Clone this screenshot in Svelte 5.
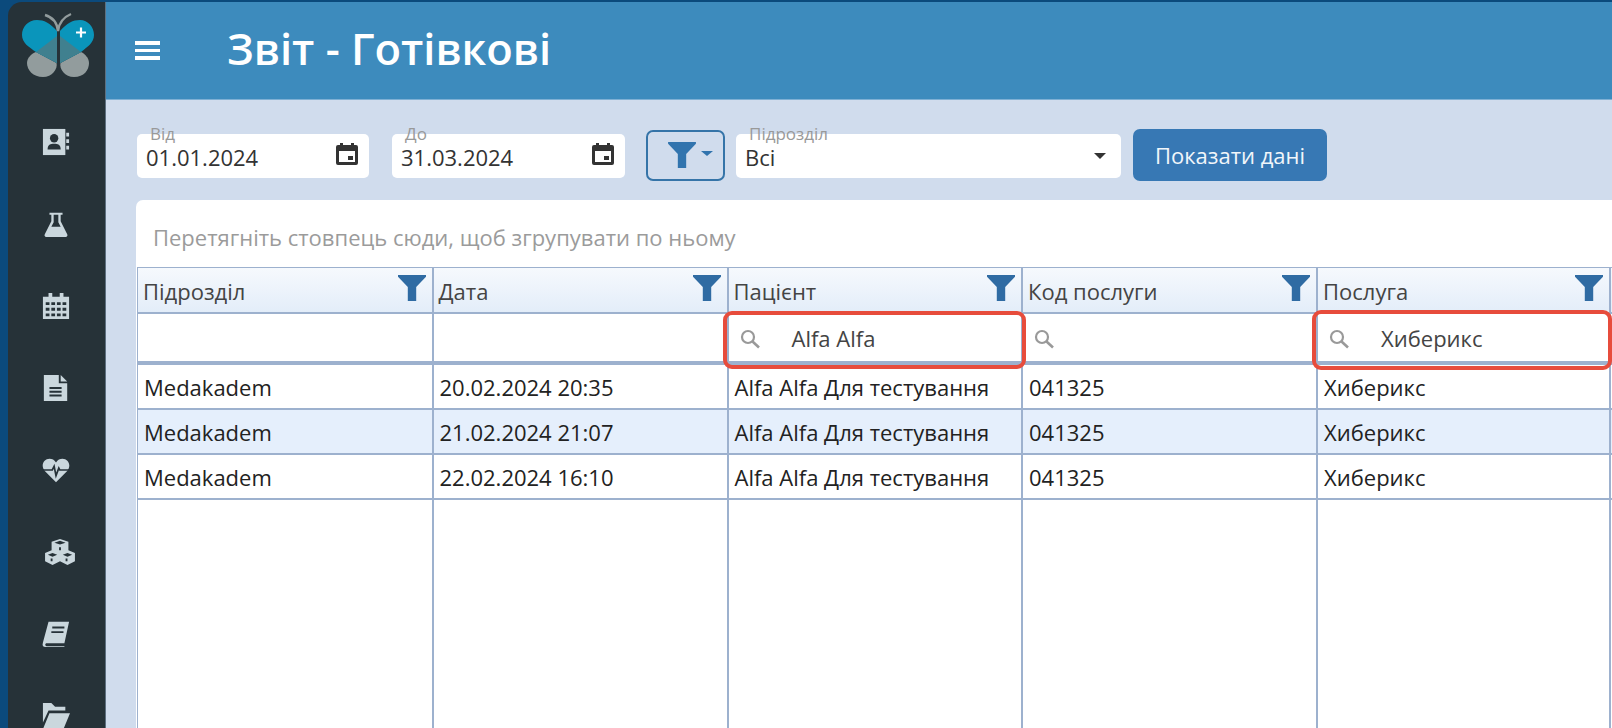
<script>
  const cols = [
    { title: 'Підрозділ', search: false, value: '' },
    { title: 'Дата', search: false, value: '' },
    { title: 'Пацієнт', search: true, value: 'Alfa Alfa' },
    { title: 'Код послуги', search: true, value: '' },
    { title: 'Послуга', search: true, value: 'Хиберикс' }
  ];
  const rows = [
    ['Medakadem', '20.02.2024 20:35', 'Alfa Alfa Для тестування', '041325', 'Хиберикс'],
    ['Medakadem', '21.02.2024 21:07', 'Alfa Alfa Для тестування', '041325', 'Хиберикс'],
    ['Medakadem', '22.02.2024 16:10', 'Alfa Alfa Для тестування', '041325', 'Хиберикс']
  ];
  const dates = [
    { label: 'Від', value: '01.01.2024' },
    { label: 'До', value: '31.03.2024' }
  ];
</script>

{#snippet funnel(cls)}
  <svg class={cls} viewBox="0 0 30 28" aria-hidden="true"><path d="M0 0H30V2L19.500 13V28H10.500V13L0 2Z" /></svg>
{/snippet}

<div class="page">
  <aside class="sidebar">
    <svg class="logo" viewBox="18 10 80 70" aria-hidden="true">
      <path d="M36 52L56.500 63C58 69 52 77 43 77C33 77 27 70 27 63C27 58 31 54 36 52Z" fill="#929c9d" />
      <path d="M81 52L60.500 63C59 69 65 77 74 77C84 77 89 70 89 63C89 58 85 54 81 52Z" fill="#929c9d" />
      <path d="M57 31C50 23 44 20 37 20C28 20 22 27 22 35C22 43 29 47 36 52L57 63Z" fill="#0a95bb" />
      <path d="M60 31C67 23 73 20 80 20C88 20 94 27 94 35C94 43 87 47 81 52L60 63Z" fill="#0a95bb" />
      <path d="M57 36L36 52L57 63Z M60 36L81 52L60 63Z" fill="#40808f" />
      <path d="M45 15C52 17 57 22 58 31C59 22 64 17 71 14" fill="none" stroke="#929c9d" stroke-width="2.400" />
      <path d="M81 27.500V37.500M76 32.500H86" stroke="#fff" stroke-width="2.200" />
    </svg>
    <nav class="nav">
      <svg viewBox="0 0 30 30" aria-hidden="true">
        <path d="M1 1H25V29H1Z" />
        <path d="M26 5h3v4h-3zM26 12h3v4h-3zM26 19h3v4h-3z" />
        <circle class="cut" cx="13" cy="11" r="4.500" />
        <path class="cut" d="M6 23C6 18 9 17 13 17C17 17 20 18 20 23Z" />
      </svg>
      <svg viewBox="0 0 30 30" aria-hidden="true">
        <path d="M8 3H22V5H20V12L27 26C28 28 26 29 25 29H5C4 29 2 28 3 26L10 12V5H8Z" />
        <path class="cut" d="M12.500 5H17.500V13L20 18H10L12.500 13Z" />
      </svg>
      <svg viewBox="0 0 30 30" aria-hidden="true">
        <path d="M1 5H7V1H11V5H19V1H23V5H29V29H1Z" />
        <path class="cut" d="M4 11h4v3H4zM10 11h4v3h-4zM16 11h4v3h-4zM22 11h4v3h-4zM4 17h4v3H4zM10 17h4v3h-4zM16 17h4v3h-4zM22 17h4v3h-4zM4 23h4v3H4zM10 23h4v3h-4zM16 23h4v3h-4zM22 23h4v3h-4z" />
      </svg>
      <svg viewBox="0 0 30 30" aria-hidden="true">
        <path d="M2 1H18V10H27V29H2Z" />
        <path d="M20 1L27 8H20Z" />
        <path class="cut" d="M8 14h13v2H8zM8 18h13v2H8zM8 22h13v2H8z" />
      </svg>
      <svg viewBox="0 0 30 30" aria-hidden="true">
        <path d="M15 28L3 16C-2 10 2 3 8 3C11 3 13 4 15 7C17 4 19 3 22 3C28 3 32 10 27 16Z" />
        <path d="M0 15H11L13 11L15 21L18 13L19 15H30" fill="none" stroke="#263238" stroke-width="1.800" />
      </svg>
      <svg class="wide" viewBox="0 0 36 30" aria-hidden="true">
        <path d="M18 1L27 4V13L34 16V25L26 29L18 25L10 29L2 25V16L9 13V4Z" />
        <path class="cut" d="M12 5L18 3L24 5L18 7ZM5 18L10 16L15 18L10 20ZM21 18L26 16L31 18L26 20ZM17 10v3h2v-3zM10 22h-2v3h2zM26 22h-2v3h2z" />
      </svg>
      <svg viewBox="0 0 30 30" aria-hidden="true">
        <path d="M7 2H29L24 25H5C3 25 3 28 5 28H24V29H4C1 29 0 27 1 24Z" />
        <path class="cut" d="M11 7h13v2H11zM10 12h13v2H10z" />
      </svg>
      <svg viewBox="0 0 30 30" aria-hidden="true">
        <path d="M1 1H10L14 5H25V9H7L1 22Z" />
        <path d="M8 12H30L23 29H1Z" />
      </svg>
    </nav>
  </aside>

  <div class="main">
    <header class="topbar">
      <div class="burger"><span></span><span></span><span></span></div>
      <h1>Звіт - Готівкові</h1>
    </header>

    <section class="content">
      <div class="toolbar">
        {#each dates as d}
          <div class="field date">
            <span class="float">{d.label}</span>
            <span class="val">{d.value}</span>
            <svg class="cal" viewBox="0 0 24 24" aria-hidden="true">
              <path d="M5 1h3v2h8V1h3v2h2a2 2 0 0 1 2 2v16a2 2 0 0 1-2 2H3a2 2 0 0 1-2-2V5a2 2 0 0 1 2-2h2ZM4 9v11h16V9Z" />
              <path d="M13 14h5v4h-5z" />
            </svg>
          </div>
        {/each}
        <div class="filterbtn">
          {@render funnel('fb-icon')}
          <span class="caret"></span>
        </div>
        <div class="field select">
          <span class="float">Підрозділ</span>
          <span class="val">Всі</span>
          <span class="sel-caret"></span>
        </div>
        <button class="show">Показати дані</button>
      </div>

      <div class="panel">
        <div class="group">Перетягніть стовпець сюди, щоб згрупувати по ньому</div>
        <div class="grid">
          <div class="r head">
            {#each cols as c}
              <div class="c">
                <span>{c.title}</span>
                {@render funnel('h-icon')}
              </div>
            {/each}
          </div>
          <div class="r filters">
            {#each cols as c}
              <div class="c">
                {#if c.search}
                  <svg class="mag" viewBox="0 0 22 20" aria-hidden="true">
                    <circle cx="8" cy="8" r="6" fill="none" stroke="#999" stroke-width="2.200" />
                    <path d="M12.500 12.500L19 18.500" stroke="#999" stroke-width="2.600" />
                  </svg>
                  <span class="term">{c.value}</span>
                {/if}
              </div>
            {/each}
          </div>
          {#each rows as row, i}
            <div class="r data" class:alt={i === 1}>
              {#each row as v}
                <div class="c">{v}</div>
              {/each}
            </div>
          {/each}
          <div class="r filler">
            {#each cols as c}
              <div class="c"></div>
            {/each}
          </div>
          <div class="mark m1"></div>
          <div class="mark m2"></div>
        </div>
      </div>
    </section>
  </div>
</div>

<style>
  :global(body) {
    margin: 0;
    background: #0b4a7c;
    overflow: hidden;
  }
  .page {
    display: flex;
    height: 726px;
    padding: 2px 0 0 8px;
    font-family: "Open Sans", "Noto Sans", sans-serif;
    color: #222;
    overflow: hidden;
  }
  .sidebar {
    width: 98px;
    flex: none;
    background: #263238;
    border-top-left-radius: 14px;
    border-right: 1px solid #5e7080;
    box-sizing: border-box;
  }
  .logo {
    display: block;
    width: 80px;
    height: 70px;
    margin: 8px 0 0 10px;
  }
  .nav {
    display: flex;
    flex-direction: column;
    align-items: flex-start;
    gap: 54px;
    padding: 48px 0 0 34px;
  }
  .nav svg {
    width: 28px;
    height: 28px;
    fill: #cad7dd;
    flex: none;
  }
  .nav svg.wide {
    width: 36px;
  }
  .nav .cut {
    fill: #263238;
  }
  .main {
    flex: 1;
    min-width: 0;
    display: flex;
    flex-direction: column;
  }
  .topbar {
    height: 98px;
    flex: none;
    background: #3d8bbd;
    border-bottom: 1px solid #7fb0d4;
    box-sizing: border-box;
    display: flex;
    align-items: center;
    padding-left: 29px;
    color: #fff;
  }
  .burger {
    width: 25px;
    display: flex;
    flex-direction: column;
    gap: 4px;
  }
  .burger span {
    height: 3.500px;
    background: #fff;
  }
  h1 {
    margin: -4px 0 0 67px;
    font-size: 43.500px;
    font-weight: 600;
    line-height: 1;
  }
  .content {
    flex: 1;
    min-height: 0;
    background: #d0dced;
    padding: 29px 0 0 30px;
    display: flex;
    flex-direction: column;
  }
  .toolbar {
    display: flex;
    align-items: center;
    height: 52px;
  }
  .field {
    position: relative;
    height: 44px;
    background: #fff;
    border-radius: 5px;
    box-sizing: border-box;
    display: flex;
    align-items: center;
    padding-left: 9px;
    font-size: 22px;
    color: #333;
  }
  .date {
    width: 232px;
    margin: 2px 23px 0 1px;
  }
  .date + .date {
    width: 233px;
    margin: 2px 21px 0 0;
  }
  .val {
    padding-top: 2px;
  }
  .float {
    position: absolute;
    left: 13px;
    top: -10px;
    font-size: 17px;
    line-height: 20px;
    color: #999;
  }
  .cal {
    position: absolute;
    right: 10px;
    top: 8px;
    width: 24px;
    height: 24px;
    fill: #333;
  }
  .filterbtn {
    width: 79px;
    height: 51px;
    flex: none;
    box-sizing: border-box;
    border: 2px solid #3574a8;
    border-radius: 7px;
    display: flex;
    align-items: center;
    padding-left: 19px;
    margin-right: 11px;
  }
  .fb-icon {
    width: 30px;
    height: 26px;
    fill: #3174ae;
  }
  .caret {
    margin: -4px 0 0 4px;
    border: 6px solid transparent;
    border-top: 5px solid #3174ae;
    border-bottom: 0;
  }
  .select {
    width: 385px;
    flex: none;
    margin: 2px 12px 0 0;
  }
  .sel-caret {
    position: absolute;
    right: 15px;
    top: 19px;
    border: 6px solid transparent;
    border-top: 6px solid #333;
    border-bottom: 0;
  }
  .show {
    width: 194px;
    height: 52px;
    flex: none;
    border: 0;
    border-radius: 7px;
    background: #3778b4;
    color: #f1f6fa;
    font: 500 22px "Open Sans", "Noto Sans", sans-serif;
    padding: 0;
  }
  .panel {
    flex: 1;
    min-height: 0;
    margin-top: 19px;
    background: #fff;
    border-top-left-radius: 7px;
    display: flex;
    flex-direction: column;
  }
  .group {
    height: 67px;
    flex: none;
    box-sizing: border-box;
    padding: 23px 0 0 17px;
    font-size: 22px;
    line-height: 28px;
    color: #9b9b9b;
  }
  .grid {
    position: relative;
    flex: 1;
    min-height: 0;
    margin-left: 1px;
    display: flex;
    flex-direction: column;
    border-left: 1px solid #9db1ce;
    border-top: 1px solid #9db1ce;
    font-size: 22px;
  }
  .r {
    display: grid;
    grid-template-columns: 295.500px 295px 294.500px 295px 293px;
    flex: none;
    box-sizing: border-box;
  }
  .c {
    box-sizing: border-box;
    border-right: 2px solid #9db1ce;
    display: flex;
    align-items: center;
    padding-left: 4px;
    color: #222;
    min-width: 0;
    white-space: nowrap;
  }
  .head {
    height: 46px;
    border-bottom: 2px solid #9db1ce;
    background: linear-gradient(#f6f9fd, #e3edf9);
  }
  .head .c {
    position: relative;
    color: #444;
    padding-left: 5px;
    padding-top: 2px;
  }
  .h-icon {
    position: absolute;
    right: 6px;
    top: 6px;
    width: 28px;
    height: 28px;
    fill: #2f6ba3;
  }
  .filters {
    height: 51px;
    border-bottom: 4px solid #9db1ce;
  }
  .filters .c {
    padding-left: 11px;
    position: relative;
  }
  .mag {
    width: 22px;
    height: 20px;
    flex: none;
    margin-top: 3px;
  }
  .term {
    margin-left: 30px;
    color: #444;
  }
  .data {
    height: 45px;
    border-bottom: 2px solid #9db1ce;
  }
  .data .c {
    padding-left: 6px;
    color: #222;
  }
  .alt {
    background: #e5effc;
  }
  .filler {
    flex: 1;
  }
  .mark {
    position: absolute;
    top: 43px;
    height: 58px;
    box-sizing: border-box;
    border: 4px solid #e74c3c;
    border-radius: 9px;
  }
  .m1 {
    left: 585px;
    width: 303px;
  }
  .m2 {
    left: 1174px;
    top: 42px;
    height: 60px;
    width: 300px;
  }
</style>
